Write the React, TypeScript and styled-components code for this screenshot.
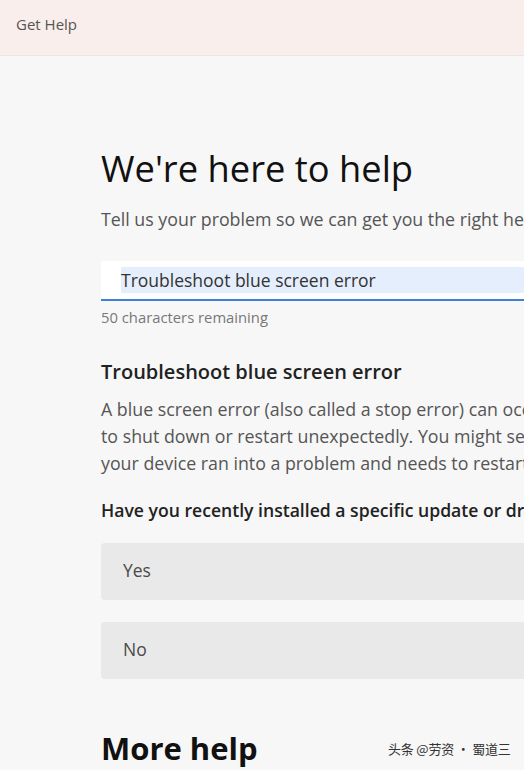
import styled, { createGlobalStyle } from "styled-components";

const GlobalStyle = createGlobalStyle`
    html, body {
        margin: 0;
        padding: 0;
        background: #f7f7f7;
        overflow: hidden;
    }
    body {
        font-family: "Open Sans", "Noto Sans", "Noto Sans CJK SC", sans-serif;
        color: #1a1a1a;
    }
`;

const Page = styled.div`
    width: 524px;
    height: 770px;
    display: flex;
    flex-direction: column;
    overflow: hidden;
    position: relative;
`;

const TitleBar = styled.header`
    height: 56px;
    box-sizing: border-box;
    flex-shrink: 0;
    background: #f9eeec;
    border-bottom: 1px solid #ece4e2;
    padding: 13px 0 0 16px;
    font-size: 15px;
    line-height: 22px;
    color: #555;
`;

const Content = styled.main`
    padding: 89px 0 0 101px;
    width: 660px;
    display: flex;
    flex-direction: column;
`;

const Heading = styled.h1`
    margin: 0;
    font-size: 36.3px;
    font-weight: 400;
    line-height: 46px;
    color: #111;
`;

const Lead = styled.p`
    margin: 16px 0 0;
    font-size: 17.8px;
    line-height: 24px;
    color: #555;
    white-space: nowrap;
`;

const InputBox = styled.div`
    margin-top: 30px;
    height: 38px;
    background: #fff;
    border-bottom: 2px solid #3d80d6;
    display: flex;
    align-items: center;
    padding-left: 20px;
`;

const Selected = styled.span`
    flex: 1;
    background: #e5eefc;
    height: 26px;
    display: flex;
    align-items: center;
    font-size: 17.5px;
    color: #333;
    white-space: nowrap;
`;

const Counter = styled.div`
    margin-top: 6px;
    font-size: 14.8px;
    line-height: 20px;
    color: #777;
`;

const SubHeading = styled.h2`
    margin: 32px 0 0;
    font-size: 20px;
    font-weight: 600;
    line-height: 26px;
    color: #222;
`;

const Body = styled.p`
    margin: 11px 0 0;
    font-size: 17.8px;
    line-height: 27px;
    color: #555;
    white-space: nowrap;
`;

const Question = styled.h3`
    margin: 21px 0 0;
    font-size: 17.6px;
    font-weight: 600;
    line-height: 24px;
    color: #222;
    white-space: nowrap;
`;

const Options = styled.div`
    margin-top: 21px;
    display: flex;
    flex-direction: column;
    gap: 22px;
`;

const Option = styled.button`
    height: 57px;
    border: none;
    border-radius: 4px;
    background: #e9e9e9;
    text-align: left;
    padding: 0 22px 4px;
    font-family: inherit;
    font-size: 17.5px;
    color: #4a4a4a;
`;

const MoreHelp = styled.h2`
    margin: 49px 0 0;
    font-size: 31px;
    font-weight: 700;
    line-height: 40px;
    color: #111;
`;

const Watermark = styled.div`
    position: absolute;
    left: 388px;
    top: 739px;
    font-family: "Noto Sans CJK SC", sans-serif;
    font-size: 13px;
    letter-spacing: -0.2px;
    color: #333;
    white-space: nowrap;
`;

export default function App() {
    return (
        <>
            <GlobalStyle />
            <Page>
                <TitleBar>Get Help</TitleBar>
                <Content>
                    <Heading>We're here to help</Heading>
                    <Lead>Tell us your problem so we can get you the right help and support.</Lead>
                    <InputBox>
                        <Selected>Troubleshoot blue screen error</Selected>
                    </InputBox>
                    <Counter>50 characters remaining</Counter>
                    <SubHeading>Troubleshoot blue screen error</SubHeading>
                    <Body>
                        A blue screen error (also called a stop error) can occur if a problem causes your device
                        <br />
                        to shut down or restart unexpectedly. You might see a blue screen with a message that
                        <br />
                        your device ran into a problem and needs to restart.
                    </Body>
                    <Question>Have you recently installed a specific update or driver?</Question>
                    <Options>
                        <Option>Yes</Option>
                        <Option>No</Option>
                    </Options>
                    <MoreHelp>More help</MoreHelp>
                </Content>
                <Watermark>头条 @劳资 · 蜀道三</Watermark>
            </Page>
        </>
    );
}
